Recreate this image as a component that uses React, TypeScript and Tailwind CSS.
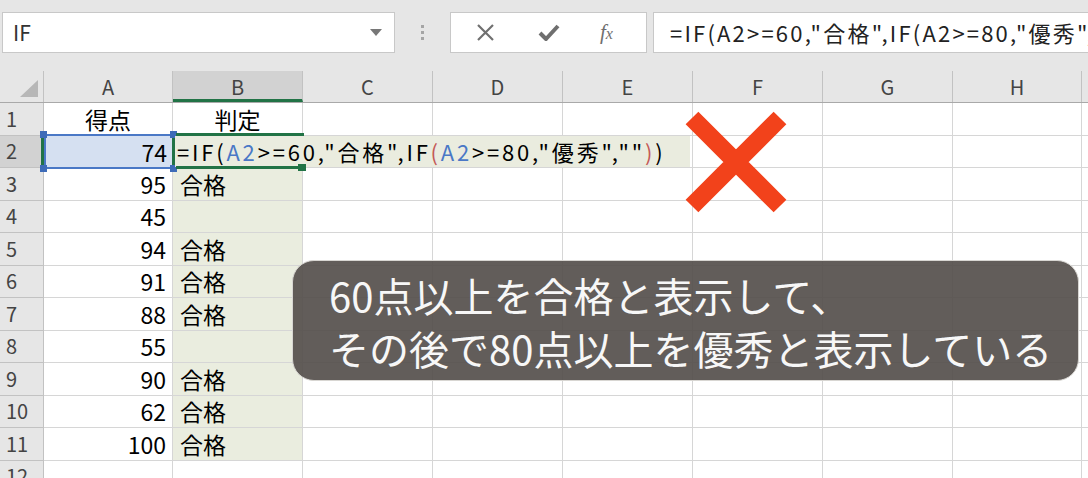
import React from 'react';

const colWidths = [44, 129, 130, 130, 130, 130, 130, 130, 129];
const colNames = ['A', 'B', 'C', 'D', 'E', 'F', 'G', 'H'];

const rows = [
  { n: 1, a: '得点', b: '判定' },
  { n: 2, a: '74', b: '' },
  { n: 3, a: '95', b: '合格' },
  { n: 4, a: '45', b: '' },
  { n: 5, a: '94', b: '合格' },
  { n: 6, a: '91', b: '合格' },
  { n: 7, a: '88', b: '合格' },
  { n: 8, a: '55', b: '' },
  { n: 9, a: '90', b: '合格' },
  { n: 10, a: '62', b: '合格' },
  { n: 11, a: '100', b: '合格' },
  { n: 12, a: '', b: '' },
];

const font = { fontFamily: '"Noto Sans CJK JP", "Noto Sans", sans-serif' };

const Formula = () => (
  <span className="whitespace-nowrap text-[22px] tracking-[2.8px]">
    =IF(<span className="text-[#4a78c6]">A2</span>&gt;=60,"合格",IF
    <span className="text-[#c45a57]">(</span>
    <span className="text-[#4a78c6]">A2</span>&gt;=80,"優秀",""
    <span className="text-[#c45a57]">)</span>)
  </span>
);

export default function App() {
  return (
    <div className="relative w-[1088px] h-[478px] overflow-hidden bg-white text-black" style={font}>
      {/* formula bar */}
      <div className="flex h-[71px] items-start bg-[#e6e6e6] pl-[2px] pt-[12px]">
        <div className="flex h-[41px] w-[393px] items-center justify-between border border-[#c8c8c8] bg-white pl-[10px] pr-[12px]">
          <span className="text-[21px] text-[#333]">IF</span>
          <svg width="12" height="8" viewBox="0 0 12 8">
            <path d="M0 0 L12 0 L6 7 Z" fill="#777" />
          </svg>
        </div>
        <div className="flex h-[41px] w-[55px] flex-col items-center justify-center gap-[3px]">
          <span className="h-[3px] w-[3px] bg-[#a5a5a5]" />
          <span className="h-[3px] w-[3px] bg-[#a5a5a5]" />
          <span className="h-[3px] w-[3px] bg-[#a5a5a5]" />
        </div>
        <div className="flex h-[41px] w-[197px] items-center border border-[#c8c8c8] bg-white pl-[25px]">
          <svg width="19" height="19" viewBox="0 0 19 19" className="mr-[43px]">
            <path d="M2 2 L17 17 M17 2 L2 17" stroke="#707070" strokeWidth="2.2" />
          </svg>
          <svg width="22" height="18" viewBox="0 0 22 18" className="mr-[40px]">
            <path d="M2 9 L8 15 L20 2" stroke="#6f6f6f" strokeWidth="4" fill="none" strokeLinejoin="round" />
          </svg>
          <span className="text-[21px] italic text-[#6f6f6f]" style={{ fontFamily: '"Liberation Serif", serif' }}>
            f<span className="text-[16px]">x</span>
          </span>
        </div>
        <div className="ml-[6px] flex h-[41px] flex-1 items-center overflow-hidden border border-r-0 border-[#c8c8c8] bg-white pl-[16px] text-[#222]">
          <span className="whitespace-nowrap text-[22px] tracking-[2.2px]">=IF(A2&gt;=60,"合格",IF(A2&gt;=80,"優秀","")</span>
        </div>
      </div>

      {/* column headers */}
      <div className="flex h-[32px] border-b border-[#a9a9a9] bg-[#e6e6e6]">
        <div className="relative w-[44px] shrink-0 border-r border-[#c2c2c2]">
          <svg width="18" height="18" viewBox="0 0 18 18" className="absolute left-[20px] top-[9px]">
            <path d="M18 0 L18 17 L0 17 Z" fill="#b7b7b7" />
          </svg>
        </div>
        {colNames.map((c, i) => (
          <div
            key={c}
            className={`flex shrink-0 items-center justify-center border-r border-[#c2c2c2] text-[20px] text-[#444] ${
              c === 'B' ? 'border-b-[3px] border-b-[#217346] bg-[#d2d2d2] pt-[3px]' : ''
            }`}
            style={{ width: colWidths[i + 1] }}
          >
            {c}
          </div>
        ))}
        <div className="flex-1" />
      </div>

      {/* rows */}
      {rows.map((r) => (
        <div key={r.n} className="flex h-[32.5px]">
          <div
            className={`flex w-[44px] shrink-0 items-center border-b border-r border-[#c2c2c2] pl-[6px] text-[20px] text-[#444] ${
              r.n === 2 ? 'border-r-[3px] border-r-[#217346] bg-[#d2d2d2]' : 'bg-[#e6e6e6]'
            }`}
          >
            {r.n}
          </div>
          <div
            className={`flex w-[129px] shrink-0 items-center border-b border-r border-[#d6d6d6] text-[23px] ${
              r.n === 1 ? 'justify-center' : 'justify-end pr-[6px]'
            }`}
          >
            {r.a}
          </div>
          <div
            className={`flex w-[130px] shrink-0 items-center border-b border-r border-[#d6d6d6] text-[23px] ${
              r.n === 1 ? 'justify-center' : 'pl-[7px]'
            } ${r.n >= 2 && r.n <= 11 ? 'bg-[#eaeddf]' : ''}`}
          >
            {r.b}
          </div>
          {colWidths.slice(3).map((w, i) => (
            <div key={i} className="shrink-0 border-b border-r border-[#d6d6d6]" style={{ width: w }} />
          ))}
          <div className="flex-1 border-b border-[#d6d6d6]" />
        </div>
      ))}

      {/* A2 range highlight */}
      <div className="absolute left-[44px] top-[134px] h-[35px] w-[130px] border-2 border-[#4a78c6] bg-[#d5e0f1]" />
      <div className="absolute left-[44px] top-[136px] flex h-[32px] w-[123px] items-center justify-end text-[23px]">74</div>
      <span className="absolute left-[40px] top-[131px] h-[7px] w-[7px] bg-[#3d6bb8]" />
      <span className="absolute left-[170px] top-[131px] h-[7px] w-[7px] bg-[#3d6bb8]" />
      <span className="absolute left-[40px] top-[165px] h-[7px] w-[7px] bg-[#3d6bb8]" />
      <span className="absolute left-[170px] top-[165px] h-[7px] w-[7px] bg-[#3d6bb8]" />

      {/* B2 in-cell editor */}
      <div className="absolute left-[175px] top-[136px] flex h-[31px] w-[515px] items-center bg-[#eaecdf] pl-[2px]">
        <Formula />
      </div>
      <div className="absolute left-[176px] top-[133px] h-[3px] w-[128px] bg-[#217346]" />
      <div className="absolute left-[176px] top-[166px] h-[3px] w-[124px] bg-[#217346]" />
      <div className="absolute left-[172px] top-[138px] h-[27px] w-[3px] bg-[#217346]" />
      <div className="absolute left-[298px] top-[164px] h-[7px] w-[8px] bg-[#217346]" />

      {/* red cross */}
      <svg width="102" height="102" viewBox="0 0 102 102" className="absolute left-[685px] top-[111px]">
        <path d="M7 7 L95 95 M95 7 L7 95" stroke="#f2421b" strokeWidth="18" />
      </svg>

      {/* caption */}
      <div className="absolute left-[292px] top-[260px] h-[121px] w-[787px] rounded-[22px] border border-[#d8d6d2] bg-[rgba(86,81,77,0.93)] pl-[36px] pt-[8px] text-[40px] leading-[53px] text-[#f7f7f7]">
        <div>60点以上を合格と表示して、</div>
        <div>その後で80点以上を優秀と表示している</div>
      </div>
    </div>
  );
}
